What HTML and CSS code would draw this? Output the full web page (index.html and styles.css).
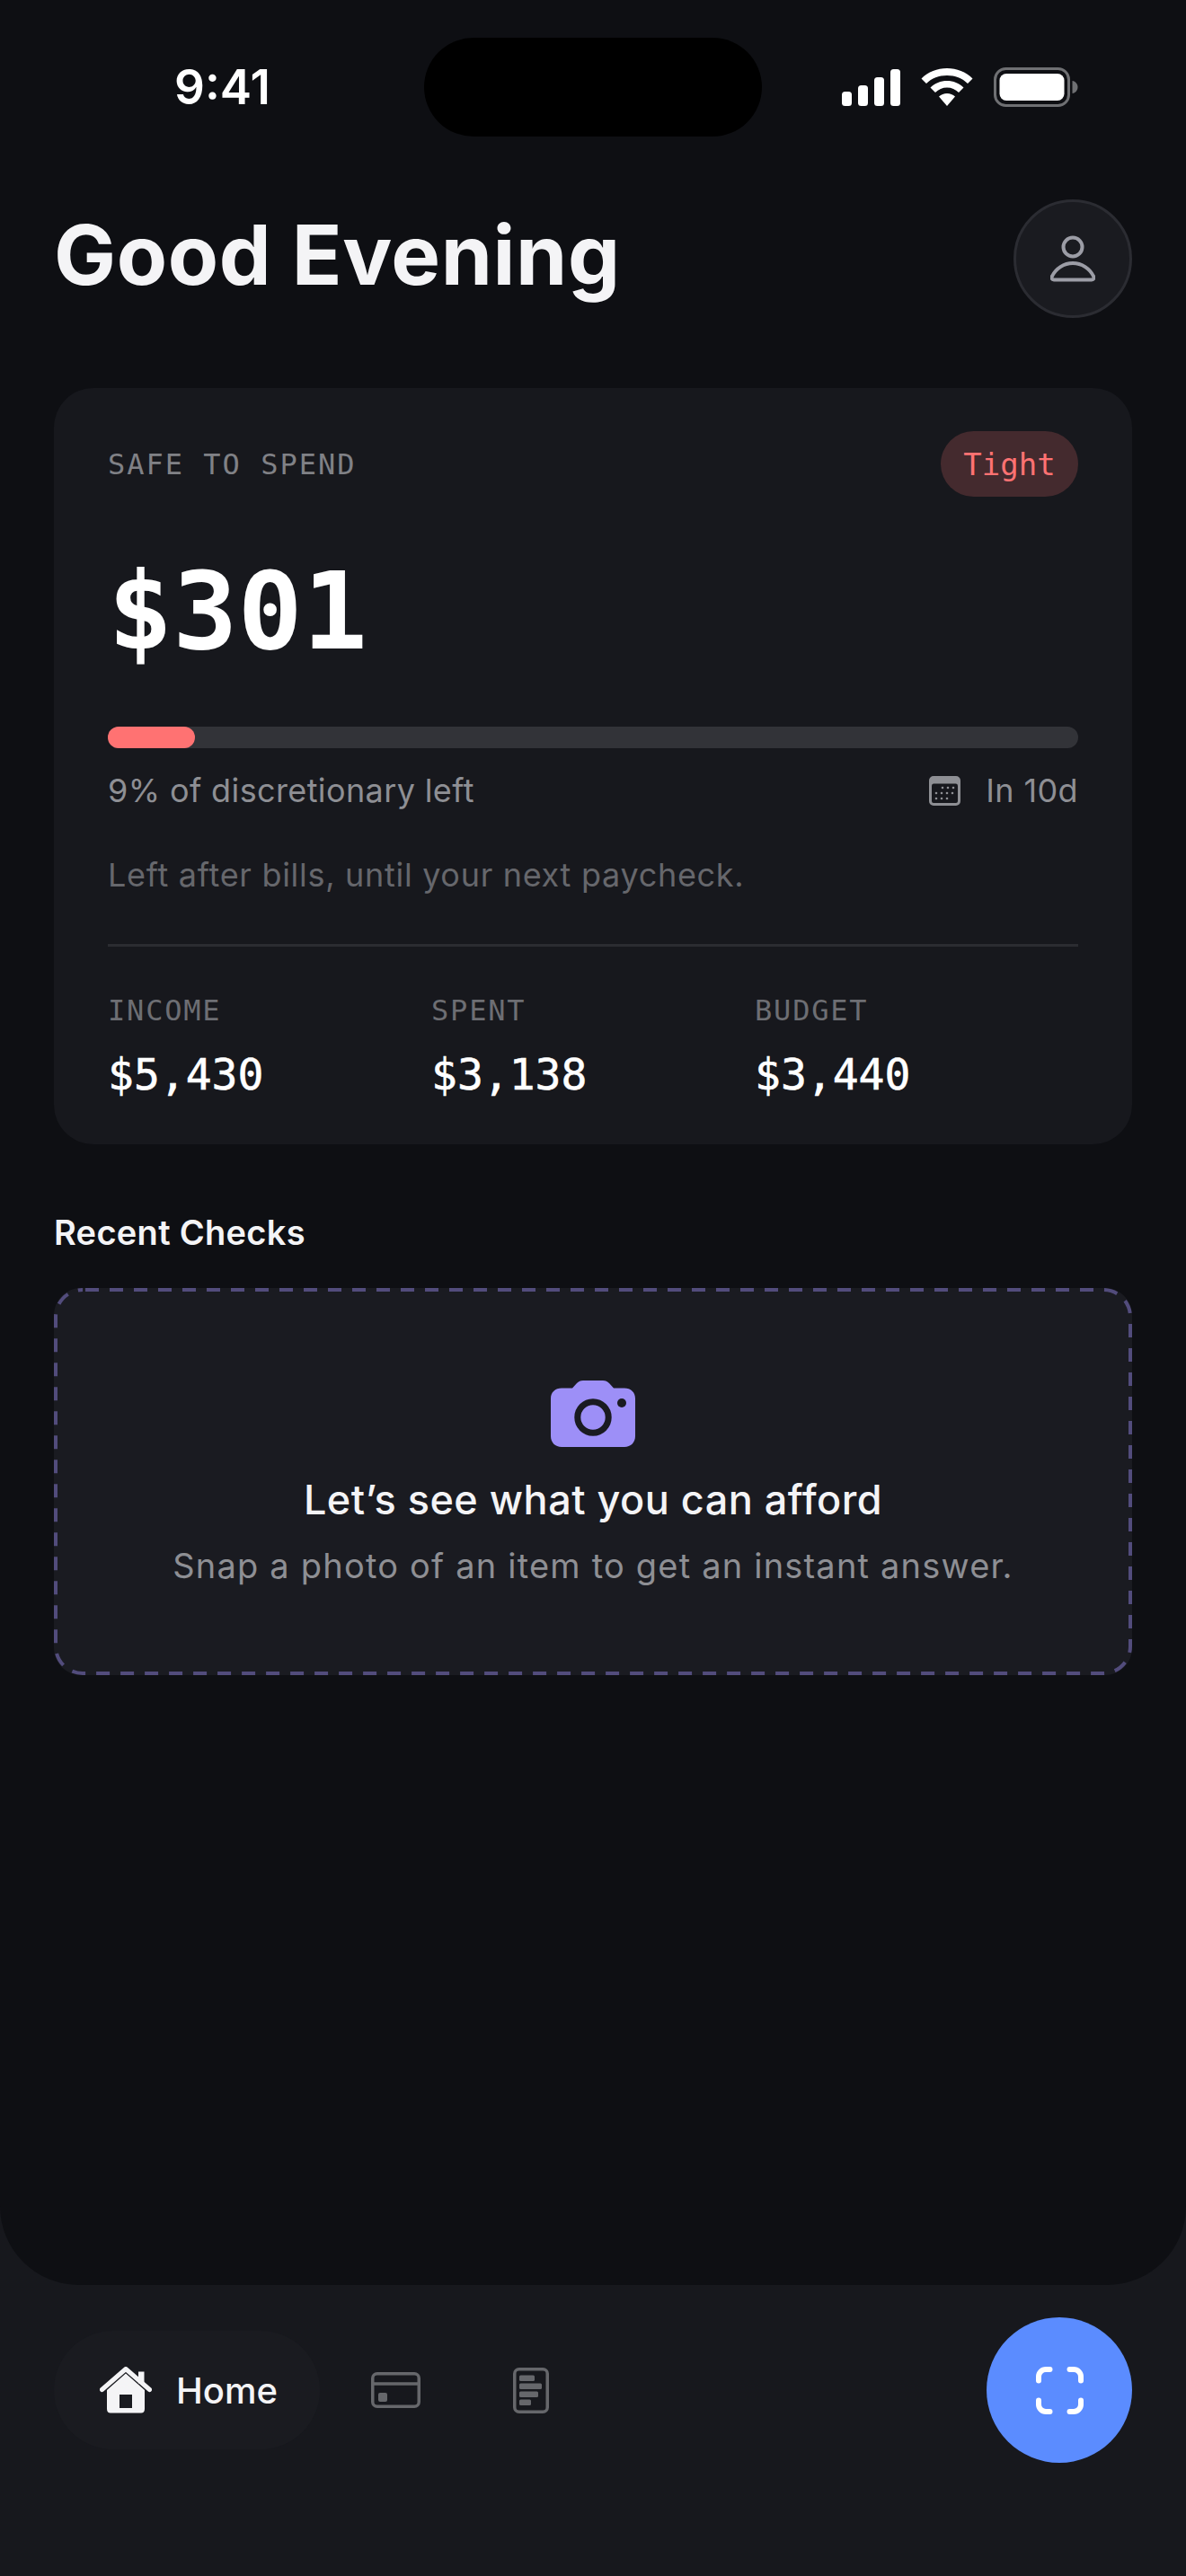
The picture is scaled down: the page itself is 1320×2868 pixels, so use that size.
FILE: index.html
```html
<!DOCTYPE html>
<html lang="en">
<head>
    <meta charset="UTF-8">
    <meta name="viewport" content="width=device-width, initial-scale=1.0">
    <title>Home - Safe to Spend</title>
    <link rel="stylesheet" href="styles.css">
</head>
<body>
    <div class="screen">
        <main class="main">
            <div class="status-bar">
                <span class="status-time">9:41</span>
                <div class="island"></div>
                <div class="status-icons">
                    <svg class="icon-signal" width="65" height="41" viewBox="0 0 65 41" fill="#fff">
                        <rect x="0" y="25" width="11" height="16" rx="3.5"/>
                        <rect x="18" y="18" width="11" height="23" rx="3.5"/>
                        <rect x="36" y="9" width="11" height="32" rx="3.5"/>
                        <rect x="54" y="0" width="11" height="41" rx="3.5"/>
                    </svg>
                    <svg class="icon-wifi" width="58" height="42" viewBox="0 0 58 42" fill="#fff">
                        <path d="M29 0C18 0 8 4 0.5 11.500L6 17C12 11 20 8 29 8S46 11 52 17L57.500 11.500C50 4 40 0 29 0Z"/>
                        <path d="M29 14C22 14 15.500 16.500 10.500 21.500L16 27C19.500 23.500 24 21.500 29 21.500S38.500 23.500 42 27L47.500 21.500C42.500 16.500 36 14 29 14Z"/>
                        <path d="M29 28C25.500 28 22.500 29.300 20 31.500L29 42L38 31.500C35.500 29.300 32.500 28 29 28Z"/>
                    </svg>
                    <svg class="icon-battery" width="94" height="44" viewBox="0 0 94 44">
                        <rect x="1.500" y="1.500" width="82" height="41" rx="12" fill="none" stroke="#6f7073" stroke-width="3"/>
                        <rect x="6.500" y="7" width="72" height="30" rx="7.500" fill="#fff"/>
                        <path d="M87.500 15C91 15.500 93.500 18.500 93.500 22S91 28.500 87.500 29Z" fill="#6f7073"/>
                    </svg>
                </div>
            </div>

            <header class="page-header">
                <h1>Good Evening</h1>
                <button class="avatar" aria-label="Profile">
                    <svg width="50" height="52" viewBox="0 0 50 52" fill="none" stroke="#9c9da6" stroke-width="4">
                        <circle cx="25" cy="13" r="10.500"/>
                        <path d="M4 49.500C1.500 49.500 1 47.500 2 45.500C6 37 15 31 25 31S44 37 48 45.500C49 47.500 48.500 49.500 46 49.500Z"/>
                    </svg>
                </button>
            </header>

            <section class="budget-card">
                <div class="budget-top">
                    <span class="mono-label">SAFE TO SPEND</span>
                    <span class="status-pill">Tight</span>
                </div>
                <div class="budget-amount">$301</div>
                <div class="progress"><div class="progress-fill" style="width: 9%"></div></div>
                <div class="progress-meta">
                    <span>9% of discretionary left</span>
                    <span class="payday">
                        <svg width="35" height="33" viewBox="0 0 35 33">
                            <path fill="#8e8f94" fill-rule="evenodd" d="M5 0H30A5 5 0 0 1 35 5V28A5 5 0 0 1 30 33H5A5 5 0 0 1 0 28V5A5 5 0 0 1 5 0ZM5 8.500A2.500 2.500 0 0 0 3 11V28A2 2 0 0 0 5 30H30A2 2 0 0 0 32 28V11A2.500 2.500 0 0 0 30 8.500Z"/>
                            <g fill="#8e8f94">
                                <circle cx="15" cy="13" r="1.300"/><circle cx="21" cy="13" r="1.300"/><circle cx="27" cy="13" r="1.300"/>
                                <circle cx="8" cy="19" r="1.300"/><circle cx="14" cy="19" r="1.300"/><circle cx="20" cy="19" r="1.300"/><circle cx="26" cy="19" r="1.300"/>
                                <circle cx="8" cy="25" r="1.300"/><circle cx="14" cy="25" r="1.300"/><circle cx="20" cy="25" r="1.300"/>
                            </g>
                        </svg>
                        In 10d
                    </span>
                </div>
                <p class="budget-note">Left after bills, until your next paycheck.</p>
                <div class="budget-stats">
                    <div class="stat">
                        <div class="stat-label">INCOME</div>
                        <div class="stat-value">$5,430</div>
                    </div>
                    <div class="stat">
                        <div class="stat-label">SPENT</div>
                        <div class="stat-value">$3,138</div>
                    </div>
                    <div class="stat">
                        <div class="stat-label">BUDGET</div>
                        <div class="stat-value">$3,440</div>
                    </div>
                </div>
            </section>

            <h2 class="section-title">Recent Checks</h2>
            <section class="empty-state">
                <svg class="empty-border" width="1200" height="431" viewBox="0 0 1200 431">
                    <rect x="2" y="2" width="1196" height="427" rx="30" fill="none" stroke="#524c7c" stroke-width="4" stroke-dasharray="15 12" stroke-dashoffset="-3"/>
                </svg>
                <svg width="94" height="74" viewBox="0 0 94 74">
                    <path fill="#9d8ff7" d="M36 0H58C61 0 63 1 65 3L70 8.500H82C89 8.500 94 13 94 20V62C94 69 89 74 82 74H12C5 74 0 69 0 62V20C0 13 5 8.500 12 8.500H24L29 3C31 1 33 0 36 0Z"/>
                    <circle cx="47" cy="41" r="17.200" fill="none" stroke="#1a1b21" stroke-width="7"/>
                    <circle cx="79" cy="25" r="5" fill="#1a1b21"/>
                </svg>
                <div class="empty-title">Let’s see what you can afford</div>
                <div class="empty-text">Snap a photo of an item to get an instant answer.</div>
            </section>
        </main>

        <nav class="bottom-nav">
            <a class="nav-home">
                <svg width="58" height="52" viewBox="0 0 58 52">
                    <path fill="#f4f4f6" fill-rule="evenodd" d="M29 7.500L50 26V47C50 50 48.500 51.500 46 51.500H12C9.500 51.500 8 50 8 47V26ZM22 31V46H36V31Z"/>
                    <path fill="none" stroke="#f4f4f6" stroke-width="5" stroke-linecap="round" stroke-linejoin="round" d="M2.500 25.500L29 2.500L55.500 25.500"/>
                    <rect x="43" y="5.500" width="6.500" height="13" fill="#f4f4f6"/>
                </svg>
                <span>Home</span>
            </a>
            <a class="nav-icon">
                <svg width="55" height="40" viewBox="0 0 55 40" fill="none" stroke="#66676b" stroke-width="3.500">
                    <rect x="1.750" y="1.750" width="51.500" height="36.500" rx="5"/>
                    <path d="M2 13H53"/>
                    <rect x="8" y="23" width="10" height="10" rx="2" fill="#66676b" stroke="none"/>
                </svg>
            </a>
            <a class="nav-icon nav-report">
                <svg width="40" height="51" viewBox="0 0 40 51">
                    <rect x="1.750" y="1.750" width="36.500" height="47.500" rx="5" fill="none" stroke="#66676b" stroke-width="3.500"/>
                    <g fill="#66676b">
                        <rect x="7" y="8.500" width="17" height="6.500" rx="1.500"/>
                        <rect x="7" y="17.500" width="25" height="6.500" rx="1.500"/>
                        <rect x="7" y="26.500" width="21" height="6.500" rx="1.500"/>
                        <rect x="7" y="35.500" width="13" height="6.500" rx="1.500"/>
                    </g>
                </svg>
            </a>
            <button class="scan-button" aria-label="Scan">
                <svg width="53" height="53" viewBox="0 0 53 53" fill="none" stroke="#fff" stroke-width="6" stroke-linecap="round">
                    <path d="M3 15.500V11A8 8 0 0 1 11 3H15.500"/>
                    <path d="M37.500 3H42A8 8 0 0 1 50 11V15.500"/>
                    <path d="M50 37.500V42A8 8 0 0 1 42 50H37.500"/>
                    <path d="M15.500 50H11A8 8 0 0 1 3 42V37.500"/>
                </svg>
            </button>
        </nav>
    </div>
</body>
</html>
```

FILE: styles.css
```css
body, html {
    margin: 0;
    padding: 0;
    height: 100%;
    background-color: #17181d;
    font-family: 'Inter', 'Noto Sans', sans-serif;
    color: #f4f4f6;
}
.screen {
    width: 1320px;
    height: 2868px;
    display: flex;
    flex-direction: column;
    overflow: hidden;
}
.main {
    height: 2544px;
    box-sizing: border-box;
    padding: 42px 60px 0;
    background-color: #0e0f13;
    border-radius: 0 0 88px 88px;
}
.status-bar {
    height: 110px;
    display: flex;
    align-items: center;
    justify-content: space-between;
}
.status-time {
    width: 412px;
    padding-left: 134px;
    box-sizing: border-box;
    font-size: 53px;
    font-weight: 600;
    color: #fff;
}
.island {
    width: 376px;
    height: 110px;
    border-radius: 55px;
    background-color: #000;
}
.status-icons {
    width: 412px;
    display: flex;
    align-items: center;
    padding-left: 89px;
    box-sizing: border-box;
}
.icon-wifi {
    margin-left: 23px;
}
.icon-battery {
    margin-left: 23px;
}
.page-header {
    margin-top: 70px;
    display: flex;
    align-items: center;
    justify-content: space-between;
}
h1 {
    margin: 0 0 8px;
    font-size: 92px;
    font-weight: 700;
    letter-spacing: 0.6px;
    line-height: 124px;
    color: #f4f4f6;
}
.avatar {
    width: 132px;
    height: 132px;
    padding: 0;
    display: flex;
    align-items: center;
    justify-content: center;
    background-color: #1a1b20;
    border: 3px solid #2b2c32;
    border-radius: 50%;
}
.budget-card {
    margin-top: 78px;
    height: 842px;
    box-sizing: border-box;
    padding: 48px 60px 0;
    background-color: #17181d;
    border-radius: 44px;
}
.budget-top {
    display: flex;
    align-items: center;
    justify-content: space-between;
}
.mono-label {
    font-family: 'DejaVu Sans Mono', monospace;
    font-size: 32px;
    letter-spacing: 2px;
    color: #808186;
}
.status-pill {
    width: 153px;
    height: 73px;
    display: flex;
    align-items: center;
    justify-content: center;
    border-radius: 37px;
    background-color: #442a2e;
    color: #ff7272;
    font-family: 'DejaVu Sans Mono', monospace;
    font-size: 34px;
}
.budget-amount {
    margin-top: 60px;
    font-family: 'DejaVu Sans Mono', monospace;
    font-size: 120px;
    font-weight: 700;
    line-height: 136px;
    color: #fff;
}
.progress {
    margin-top: 60px;
    height: 24px;
    border-radius: 12px;
    background-color: #323338;
}
.progress-fill {
    height: 100%;
    border-radius: 12px;
    background-color: #ff7272;
}
.progress-meta {
    margin-top: 23px;
    display: flex;
    align-items: center;
    justify-content: space-between;
    font-size: 36px;
    letter-spacing: 0.38px;
    line-height: 48px;
    color: #8e8f94;
}
.payday {
    display: flex;
    align-items: center;
    gap: 28px;
}
.budget-note {
    margin: 46px 0 0;
    padding-bottom: 53px;
    font-size: 36px;
    letter-spacing: 0.7px;
    line-height: 48px;
    color: #66676c;
    border-bottom: 3px solid #2b2c31;
}
.budget-stats {
    margin-top: 51px;
    display: grid;
    grid-template-columns: repeat(3, 360px);
}
.stat-label {
    font-family: 'DejaVu Sans Mono', monospace;
    font-size: 32px;
    letter-spacing: 1.8px;
    line-height: 40px;
    color: #6d6e73;
}
.stat-value {
    margin-top: 21px;
    font-family: 'DejaVu Sans Mono', monospace;
    font-size: 48px;
    -webkit-text-stroke: 0.6px #fff;
    line-height: 60px;
    color: #fff;
}
.section-title {
    margin: 75px 0 0;
    font-size: 38px;
    font-weight: 600;
    letter-spacing: 0.3px;
    line-height: 46px;
    color: #f4f4f6;
}
.empty-state {
    position: relative;
    margin-top: 39px;
    height: 431px;
    box-sizing: border-box;
    padding-top: 103px;
    display: flex;
    flex-direction: column;
    align-items: center;
    background-color: #1a1b21;
    border-radius: 30px;
}
.empty-border {
    position: absolute;
    top: 0;
    left: 0;
}
.empty-title {
    margin-top: 31px;
    font-size: 45px;
    font-weight: 500;
    letter-spacing: 0.5px;
    line-height: 56px;
    color: #f4f4f6;
}
.empty-text {
    margin-top: 20px;
    font-size: 38px;
    letter-spacing: 1.2px;
    line-height: 50px;
    color: #8e8f94;
}
.bottom-nav {
    flex: 1;
    display: flex;
    align-items: flex-start;
    padding: 51px 60px 0;
}
.nav-home {
    width: 296px;
    height: 132px;
    box-sizing: border-box;
    padding-left: 51px;
    display: flex;
    align-items: center;
    gap: 27px;
    border-radius: 66px;
    background-color: #1a1b20;
    font-size: 40px;
    font-weight: 500;
    color: #f4f4f6;
}
.nav-icon {
    margin-left: 57px;
    height: 132px;
    display: flex;
    align-items: center;
}
.nav-report {
    margin-left: 103px;
}
.scan-button {
    margin: -15px 0 0 auto;
    width: 162px;
    height: 162px;
    padding: 0;
    display: flex;
    align-items: center;
    justify-content: center;
    border: none;
    border-radius: 50%;
    background-color: #5b8cff;
}
```
